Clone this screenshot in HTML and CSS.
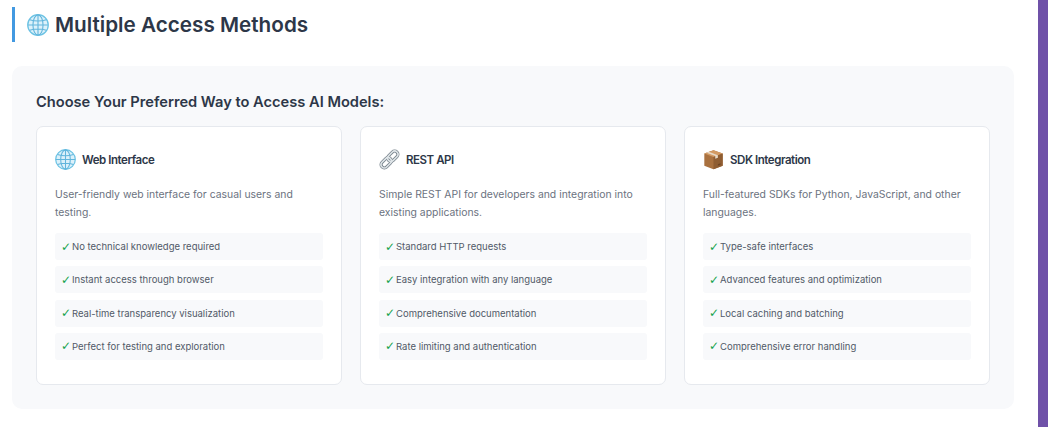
FILE: index.html
```html
<!DOCTYPE html>
<html lang="en">
<head>
<meta charset="utf-8">
<title>Multiple Access Methods</title>
<link rel="stylesheet" href="styles.css">
</head>
<body>
<main class="main">
  <h2 class="title">
    <svg class="globe-lg" viewBox="0 0 24 24"><use href="#globe"/></svg>
    <span>Multiple Access Methods</span>
  </h2>
  <section class="panel">
    <h3 class="panel-title">Choose Your Preferred Way to Access AI Models:</h3>
    <div class="cards">
      <article class="card">
        <header class="card-head">
          <svg class="icon" viewBox="0 0 24 24">
            <defs>
              <g id="globe">
                <circle cx="12" cy="12" r="11.200" fill="#dcf1fa" stroke="#6cc3e4" stroke-width="1.400"/>
                <g fill="none" stroke="#62b5dc" stroke-width="1.200">
                  <ellipse cx="12" cy="12" rx="5.500" ry="11"/>
                  <path d="M12 1v22M1 12h22M2.800 6.200c5 1.600 13.400 1.600 18.400 0M2.800 17.800c5-1.600 13.400-1.600 18.400 0"/>
                </g>
              </g>
            </defs>
            <use href="#globe"/>
          </svg>
          <h4 class="card-title">Web Interface</h4>
        </header>
        <p class="desc">User-friendly web interface for casual users and testing.</p>
        <ul class="list">
          <li class="item"><span class="check">✓</span>No technical knowledge required</li>
          <li class="item"><span class="check">✓</span>Instant access through browser</li>
          <li class="item"><span class="check">✓</span>Real-time transparency visualization</li>
          <li class="item"><span class="check">✓</span>Perfect for testing and exploration</li>
        </ul>
      </article>
      <article class="card">
        <header class="card-head">
          <svg class="icon" viewBox="0 0 24 24">
            <g fill="none">
              <g stroke="#78838c" stroke-width="3.600">
                <rect x="1.500" y="12" width="13.500" height="7.500" rx="3.750" transform="rotate(-45 8.250 15.750)"/>
                <rect x="9" y="4.500" width="13.500" height="7.500" rx="3.750" transform="rotate(-45 15.750 8.250)"/>
              </g>
              <g stroke="#dfe5e8" stroke-width="1.800">
                <rect x="1.500" y="12" width="13.500" height="7.500" rx="3.750" transform="rotate(-45 8.250 15.750)"/>
                <rect x="9" y="4.500" width="13.500" height="7.500" rx="3.750" transform="rotate(-45 15.750 8.250)"/>
              </g>
            </g>
          </svg>
          <h4 class="card-title">REST API</h4>
        </header>
        <p class="desc">Simple REST API for developers and integration into existing applications.</p>
        <ul class="list">
          <li class="item"><span class="check">✓</span>Standard HTTP requests</li>
          <li class="item"><span class="check">✓</span>Easy integration with any language</li>
          <li class="item"><span class="check">✓</span>Comprehensive documentation</li>
          <li class="item"><span class="check">✓</span>Rate limiting and authentication</li>
        </ul>
      </article>
      <article class="card">
        <header class="card-head">
          <svg class="icon" viewBox="0 0 24 24">
            <path d="M12 1.500 22.500 5v14L12 23 1.500 19V5z" fill="#a9713f"/>
            <path d="M12 1.500 22.500 5 12 9 1.500 5z" fill="#d39a63"/>
            <path d="M12 9 22.500 5v14L12 23z" fill="#8f5d32"/>
            <path d="M6.500 3.200 17 7.100v3l-3 1.100V8L4 4.200z" fill="#e6d8c6"/>
            <path d="M17 17.500l3-1.100v1.600l-3 1.100z" fill="#6d4524"/>
          </svg>
          <h4 class="card-title">SDK Integration</h4>
        </header>
        <p class="desc">Full-featured SDKs for Python, JavaScript, and other languages.</p>
        <ul class="list">
          <li class="item"><span class="check">✓</span>Type-safe interfaces</li>
          <li class="item"><span class="check">✓</span>Advanced features and optimization</li>
          <li class="item"><span class="check">✓</span>Local caching and batching</li>
          <li class="item"><span class="check">✓</span>Comprehensive error handling</li>
        </ul>
      </article>
    </div>
  </section>
</main>
<div class="edge"></div>
</body>
</html>
```
FILE: styles.css
```css
* { box-sizing: border-box; }
html, body { margin: 0; height: 100%; }
body {
  display: flex;
  background: #fff;
  font-family: Inter, "Liberation Sans", sans-serif;
  color: #2d3748;
  overflow: hidden;
}
.main { flex: 1; min-width: 0; padding: 7px 24px 0 12px; }
.edge { width: 10px; background: #6f51a8; flex: none; }
.title {
  display: flex;
  align-items: center;
  gap: 6px;
  height: 35px;
  margin: 0 0 24px;
  padding-left: 12px;
  border-left: 3px solid #4299e1;
  font-size: 20.700px;
  font-weight: 600;
  color: #2d3748;
}
.globe-lg { width: 22px; height: 22px; flex: none; }
.panel {
  background: #f8f9fb;
  border-radius: 10px;
  padding: 27px 24px 24px;
}
.panel-title {
  margin: 0 0 15px;
  font-size: 14.650px;
  line-height: 18px;
  font-weight: 600;
  color: #2d3748;
}
.cards { display: grid; grid-template-columns: repeat(3, 1fr); gap: 18px; }
.card {
  background: #fff;
  border: 1px solid #e6e9ee;
  border-radius: 7px;
  padding: 18px 18px 24px;
}
.card-head { display: flex; align-items: center; gap: 6px; height: 28px; margin-bottom: 13px; }
.icon { width: 21px; height: 21px; flex: none; }
.card-title { margin: 0; padding-top: 1px; font-size: 11.500px; letter-spacing: -0.450px; font-weight: 600; color: #2d3748; }
.desc { margin: 0 0 11px; font-size: 10.400px; line-height: 18px; color: #6b7280; }
.list { list-style: none; margin: 0; padding: 0; display: flex; flex-direction: column; gap: 6.330px; }
.item {
  display: flex;
  align-items: center;
  height: 27px;
  padding: 0 6px;
  background: #f8f9fb;
  border-radius: 3px;
  font-size: 9.500px;
  color: #515a68;
}
.check { color: #16a34a; font-family: "DejaVu Sans", sans-serif; font-weight: 700; font-size: 12px; line-height: 1; width: 11px; flex: none; }
```
